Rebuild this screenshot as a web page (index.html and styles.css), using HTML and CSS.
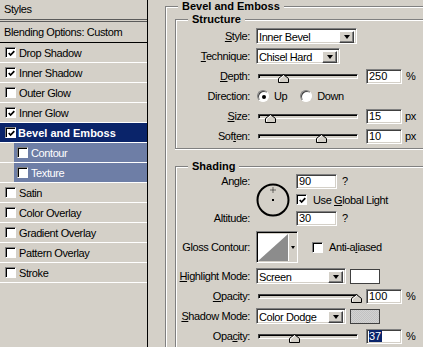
FILE: index.html
```html
<!DOCTYPE html>
<html lang="en">
<head>
    <meta charset="UTF-8">
    <meta name="viewport" content="width=device-width, initial-scale=1.0">
    <title>Layer Style - Bevel and Emboss</title>
    <link rel="stylesheet" href="styles.css">
</head>
<body>
<div class="dialog">
    <!-- Left: list of layer styles -->
    <aside class="styles-list">
        <div class="list-head">Styles</div>
        <div class="list-blend">Blending Options: Custom</div>
        <ul class="list">
            <li class="item"><span class="check on"><svg viewBox="0 0 7 7"><polyline points="0.7,3 2.6,5 6.3,1.2"/></svg></span>Drop Shadow</li>
            <li class="item"><span class="check on"><svg viewBox="0 0 7 7"><polyline points="0.7,3 2.6,5 6.3,1.2"/></svg></span>Inner Shadow</li>
            <li class="item"><span class="check"></span>Outer Glow</li>
            <li class="item"><span class="check on"><svg viewBox="0 0 7 7"><polyline points="0.7,3 2.6,5 6.3,1.2"/></svg></span>Inner Glow</li>
            <li class="item selected"><span class="check on"><svg viewBox="0 0 7 7"><polyline points="0.7,3 2.6,5 6.3,1.2"/></svg></span>Bevel and Emboss</li>
            <li class="item sub"><div class="sub-fill"><span class="check"></span>Contour</div></li>
            <li class="item sub"><div class="sub-fill"><span class="check"></span>Texture</div></li>
            <li class="item"><span class="check"></span>Satin</li>
            <li class="item"><span class="check"></span>Color Overlay</li>
            <li class="item"><span class="check"></span>Gradient Overlay</li>
            <li class="item"><span class="check"></span>Pattern Overlay</li>
            <li class="item"><span class="check"></span>Stroke</li>
        </ul>
    </aside>

    <!-- Right: settings -->
    <main class="panel">
        <fieldset class="group outer">
            <legend>Bevel and Emboss</legend>

            <fieldset class="group structure">
                <legend>Structure</legend>

                <div class="row">
                    <span class="label"><u>S</u>tyle:</span>
                    <div class="select w-style"><span class="select-text">Inner Bevel</span><span class="drop"><i class="tri"></i></span></div>
                </div>
                <div class="row">
                    <span class="label"><u>T</u>echnique:</span>
                    <div class="select w-tech"><span class="select-text">Chisel Hard</span><span class="drop"><i class="tri"></i></span></div>
                </div>
                <div class="row">
                    <span class="label"><u>D</u>epth:</span>
                    <div class="slider"><div class="track"><span class="thumb" style="left: 26%"><svg viewBox="0 0 11 9"><polygon points="0.5,8.5 0.5,4.5 5.5,0.5 10.5,4.5 10.5,8.5"/><polyline class="hi" points="1.5,7.5 1.5,5 5.5,1.8"/></svg></span></div></div>
                    <input class="field num" value="250">
                    <span class="unit">%</span>
                </div>
                <div class="row">
                    <span class="label">Direction:</span>
                    <span class="radio on"></span><span class="radio-text">Up</span>
                    <span class="radio down"></span><span class="radio-text">Down</span>
                </div>
                <div class="row">
                    <span class="label"><u>S</u>ize:</span>
                    <div class="slider"><div class="track"><span class="thumb" style="left: 12%"><svg viewBox="0 0 11 9"><polygon points="0.5,8.5 0.5,4.5 5.5,0.5 10.5,4.5 10.5,8.5"/><polyline class="hi" points="1.5,7.5 1.5,5 5.5,1.8"/></svg></span></div></div>
                    <input class="field num" value="15">
                    <span class="unit px">px</span>
                </div>
                <div class="row">
                    <span class="label">Sof<u>t</u>en:</span>
                    <div class="slider"><div class="track"><span class="thumb" style="left: 64%"><svg viewBox="0 0 11 9"><polygon points="0.5,8.5 0.5,4.5 5.5,0.5 10.5,4.5 10.5,8.5"/><polyline class="hi" points="1.5,7.5 1.5,5 5.5,1.8"/></svg></span></div></div>
                    <input class="field num" value="10">
                    <span class="unit px">px</span>
                </div>
            </fieldset>

            <fieldset class="group shading">
                <legend>Shading</legend>

                <div class="angle-grid">
                    <span class="label a-label">Angle:</span>
                    <svg class="dial" viewBox="0 0 34 34">
                        <circle cx="17" cy="17" r="15.5"/>
                        <path d="M17 4.5v5M14.5 7h5" class="cross"/>
                        <rect x="16" y="16" width="2" height="2"/>
                    </svg>
                    <div class="inline a-val"><input class="field deg" value="90"><span>?</span></div>
                    <div class="inline g-val"><span class="check on"><svg viewBox="0 0 7 7"><polyline points="0.7,3 2.6,5 6.3,1.2"/></svg></span><span class="check-text">Use <u>G</u>lobal Light</span></div>
                    <span class="label t-label">Altitude:</span>
                    <div class="inline t-val"><input class="field deg" value="30"><span>?</span></div>
                </div>

                <div class="row contour-row">
                    <span class="label">Gloss Contour:</span>
                    <div class="contour">
                        <svg class="contour-curve" viewBox="0 0 30 28" preserveAspectRatio="none">
                            <rect width="30" height="28" fill="#fff"/>
                            <polygon points="0,28 30,0 30,28" fill="#8c8c8c"/>
                        </svg>
                        <span class="contour-drop"><i class="tri small"></i></span>
                    </div>
                    <span class="check aa"></span><span class="check-text">Anti-a<u>l</u>iased</span>
                </div>

                <div class="row mode-row">
                    <span class="label"><u>H</u>ighlight Mode:</span>
                    <div class="select w-mode"><span class="select-text">Screen</span><span class="drop"><i class="tri"></i></span></div>
                    <span class="swatch white"></span>
                </div>
                <div class="row">
                    <span class="label"><u>O</u>pacity:</span>
                    <div class="slider"><div class="track"><span class="thumb" style="left: 100%"><svg viewBox="0 0 11 9"><polygon points="0.5,8.5 0.5,4.5 5.5,0.5 10.5,4.5 10.5,8.5"/><polyline class="hi" points="1.5,7.5 1.5,5 5.5,1.8"/></svg></span></div></div>
                    <input class="field num" value="100">
                    <span class="unit">%</span>
                </div>
                <div class="row">
                    <span class="label"><u>S</u>hadow Mode:</span>
                    <div class="select w-mode"><span class="select-text">Color Dodge</span><span class="drop"><i class="tri"></i></span></div>
                    <span class="swatch grey"></span>
                </div>
                <div class="row">
                    <span class="label">Opa<u>c</u>ity:</span>
                    <div class="slider"><div class="track"><span class="thumb" style="left: 37%"><svg viewBox="0 0 11 9"><polygon points="0.5,8.5 0.5,4.5 5.5,0.5 10.5,4.5 10.5,8.5"/><polyline class="hi" points="1.5,7.5 1.5,5 5.5,1.8"/></svg></span></div></div>
                    <span class="field num sel-field"><span class="sel">37</span></span>
                    <span class="unit">%</span>
                </div>
            </fieldset>
        </fieldset>
    </main>
</div>
</body>
</html>
```

FILE: styles.css
```css
* {
    box-sizing: border-box;
}

html, body {
    margin: 0;
    height: 100%;
}

body {
    background: #d4d0c8;
    font-family: "Liberation Sans", Arial, sans-serif;
    font-size: 11px;
    letter-spacing: -0.4px;
    color: #000;
    overflow: hidden;
}

u {
    text-decoration: underline;
    text-underline-offset: 1px;
}

.dialog {
    display: flex;
    height: 347px;
}

/* ---------- styles list ---------- */
.styles-list {
    width: 148px;
    flex: none;
    border-right: 1px solid #000;
}

.list-head {
    height: 22px;
    line-height: 19px;
    padding-left: 4px;
    border-bottom: 3px double #5a5a5a;
}

.list-blend {
    height: 21px;
    line-height: 20px;
    padding-left: 4px;
    border-bottom: 1px solid #000;
}

.list {
    list-style: none;
    margin: 0;
    padding: 0;
}

.item {
    display: flex;
    align-items: center;
    gap: 3px;
    height: 20px;
    padding-left: 5px;
    border-bottom: 1px solid #fff;
}

.item.selected {
    background: #0a246a;
    color: #fff;
    font-weight: bold;
    letter-spacing: 0;
    gap: 2px;
}

.item.sub {
    padding-left: 14px;
}

.sub-fill {
    flex: 1;
    height: 100%;
    display: flex;
    align-items: center;
    gap: 3px;
    padding-left: 3px;
    background: #6e7ea6;
    color: #fff;
}

/* checkbox */
.check {
    flex: none;
    width: 11px;
    height: 11px;
    background: #fff;
    border: 1px solid;
    border-color: #808080 #fff #fff #808080;
    box-shadow: inset 1px 1px 0 #000;
    display: flex;
    align-items: center;
    justify-content: center;
    padding: 1px 0 0 1px;
}

.check svg {
    width: 7px;
    height: 7px;
    fill: none;
    stroke: #000;
    stroke-width: 1.7;
}

/* ---------- settings panel ---------- */
.panel {
    flex: 1;
    min-width: 0;
    padding-left: 17px;
    overflow: hidden;
}

.group {
    margin: 0;
    min-width: 0;
    border: 1px solid #808080;
    box-shadow: inset 1px 1px 0 #fff, 0 1px 0 #fff;
}

.group legend {
    font-weight: bold;
    letter-spacing: 0;
    line-height: 12px;
    padding: 0 4px;
    margin-left: 10px;
    background: #d4d0c8;
}

.outer {
    width: 300px;
    height: 380px;
    margin-top: 0;
    padding: 1px 0 0 9px;
}

.outer > legend {
    margin-left: 3px;
}

.structure {
    width: 290px;
    padding: 1px 0 2px 2px;
}

.shading {
    width: 290px;
    height: 200px;
    margin-top: 11px;
    padding: 0 0 0 2px;
}

.row {
    display: flex;
    align-items: center;
    height: 20px;
}

.label {
    flex: none;
    width: 72px;
    margin-right: 6px;
    text-align: right;
    white-space: nowrap;
}

/* sunken text field */
.field {
    height: 15px;
    background: #fff;
    border: 1px solid;
    border-color: #808080 #fff #fff #808080;
    box-shadow: inset 1px 1px 0 #404040, inset -1px -1px 0 #d4d0c8;
    font: inherit;
    font-size: 11px;
    letter-spacing: 0;
    padding: 0 0 0 2px;
    margin: 0;
    outline: none;
    line-height: 13px;
}

.num {
    width: 36px;
    margin-left: 6px;
}

.deg {
    width: 41px;
}

.sel-field {
    display: inline-block;
}

.sel {
    background: #0a246a;
    color: #fff;
    padding: 0 1px 0 0;
}

.unit {
    margin-left: 4px;
}

.unit.px {
    margin-left: 3px;
}

/* combo box */
.select {
    display: flex;
    align-items: center;
    height: 16px;
    background: #fff;
    border: 1px solid;
    border-color: #808080 #fff #fff #808080;
    box-shadow: inset 1px 1px 0 #404040, inset -1px -1px 0 #d4d0c8;
    padding: 2px 2px 1px 2px;
}

.w-style {
    width: 101px;
}

.w-tech {
    width: 84px;
}

.w-mode {
    width: 90px;
}

.select-text {
    flex: 1;
    white-space: nowrap;
    overflow: hidden;
    line-height: 12px;
}

.drop {
    flex: none;
    width: 15px;
    height: 12px;
    background: #d4d0c8;
    border: 1px solid;
    border-color: #fff #404040 #404040 #fff;
    box-shadow: inset -1px -1px 0 #808080;
    display: flex;
    align-items: center;
    justify-content: center;
}

.tri {
    width: 0;
    height: 0;
    border-left: 3.5px solid transparent;
    border-right: 3.5px solid transparent;
    border-top: 4px solid #000;
}

.tri.small {
    border-left-width: 2.5px;
    border-right-width: 2.5px;
    border-top-width: 3px;
}

/* slider */
.slider {
    flex: none;
    width: 104px;
    height: 15px;
    padding: 5px 2px 0;
}

.track {
    position: relative;
    height: 5px;
    background: #d4d0c8;
    border: 1px solid;
    border-color: #404040 #fff #fff #404040;
    box-shadow: inset 1px 1px 0 #000;
}

.thumb {
    position: absolute;
    top: -1px;
    width: 11px;
    height: 9px;
    margin-left: -6px;
}

.thumb svg {
    display: block;
    width: 11px;
    height: 9px;
    fill: #d4d0c8;
    stroke: #000;
}

.thumb .hi {
    fill: none;
    stroke: #fff;
}

/* radio */
.radio {
    flex: none;
    width: 12px;
    height: 12px;
    border-radius: 50%;
    background: #fff;
    border: 1px solid;
    border-color: #808080 #fff #fff #808080;
    box-shadow: inset 1px 1px 0 #404040;
    margin-left: 1px;
    display: flex;
    align-items: center;
    justify-content: center;
}

.radio.on::after {
    content: "";
    width: 4px;
    height: 4px;
    margin: 1px 0 0 1px;
    border-radius: 50%;
    background: #000;
}

.radio.down {
    margin-left: 13px;
}

.radio-text {
    margin-left: 5px;
}

/* angle */
.angle-grid {
    display: grid;
    grid-template-columns: 72px 34px auto;
    grid-template-rows: 18px 19px 18px;
    column-gap: 6px;
    align-items: center;
}

.angle-grid .label {
    margin-right: 0;
}

.a-label { grid-area: 1 / 1; }
.a-val { grid-area: 1 / 3; }
.g-val { grid-area: 2 / 3; }
.t-label { grid-area: 3 / 1; }
.t-val { grid-area: 3 / 3; }

.dial {
    grid-area: 1 / 2 / 4 / 3;
    width: 34px;
    height: 34px;
    fill: none;
    stroke: #000;
    stroke-width: 2;
}

.dial .cross {
    stroke-width: 1;
    stroke-dasharray: 1 1;
}

.dial rect {
    fill: #000;
    stroke: none;
}

.inline {
    display: flex;
    align-items: center;
    gap: 5px;
}

.g-val {
    gap: 6px;
}

.check-text {
    margin-left: 6px;
}

.g-val .check-text {
    margin-left: 0;
}

/* gloss contour */
.contour-row {
    height: 32px;
    margin-top: 4px;
}

.contour {
    flex: none;
    display: flex;
    width: 42px;
    height: 32px;
    border: 1px solid;
    border-color: #808080 #fff #fff #808080;
    box-shadow: inset 1px 1px 0 #000;
    padding: 2px 0 1px 1px;
    background: #d4d0c8;
}

.contour-curve {
    width: 30px;
    height: 27px;
    display: block;
}

.contour-drop {
    flex: 1;
    display: flex;
    align-items: center;
    justify-content: center;
    border-left: 1px solid #fff;
}

.check.aa {
    margin-left: 14px;
}

/* modes */
.mode-row {
    margin-top: 3px;
}

.swatch {
    flex: none;
    width: 30px;
    height: 15px;
    margin-left: 4px;
    border: 1px solid #404040;
}

.swatch.white {
    background: #fff;
}

.swatch.grey {
    background: repeating-conic-gradient(#c2c2c2 0 25%, #d2d2d2 0 50%) 0 0 / 2px 2px;
}
```
